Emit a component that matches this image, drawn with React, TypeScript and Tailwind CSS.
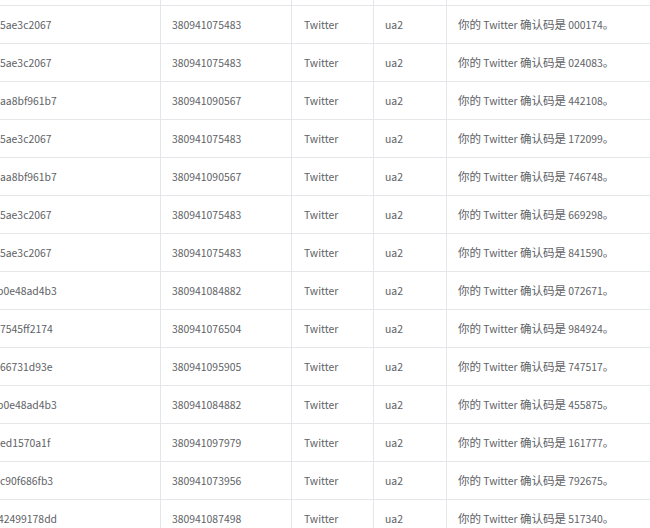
type Row = { id: string; shift: string; phone: string; code: string };

const rows: Row[] = [
  { id: "5ae3c2067", shift: "", phone: "380941075483", code: "000174" },
  { id: "5ae3c2067", shift: "", phone: "380941075483", code: "024083" },
  { id: "aa8bf961b7", shift: "", phone: "380941090567", code: "442108" },
  { id: "5ae3c2067", shift: "", phone: "380941075483", code: "172099" },
  { id: "aa8bf961b7", shift: "", phone: "380941090567", code: "746748" },
  { id: "5ae3c2067", shift: "", phone: "380941075483", code: "669298" },
  { id: "5ae3c2067", shift: "", phone: "380941075483", code: "841590" },
  { id: "b0e48ad4b3", shift: "-ml-[3px]", phone: "380941084882", code: "072671" },
  { id: "7545ff2174", shift: "", phone: "380941076504", code: "984924" },
  { id: "66731d93e", shift: "", phone: "380941095905", code: "747517" },
  { id: "b0e48ad4b3", shift: "-ml-[3px]", phone: "380941084882", code: "455875" },
  { id: "ed1570a1f", shift: "", phone: "380941097979", code: "161777" },
  { id: "c90f686fb3", shift: "", phone: "380941073956", code: "792675" },
  { id: "42499178dd", shift: "-ml-[2px]", phone: "380941087498", code: "517340" },
];

const grid = "grid grid-cols-[161px_131px_82px_73px_1fr]";
const line = "border-b border-[#e4e6ea]";
const cell = `flex items-center whitespace-nowrap ${line}`;

// CJK glyphs sit a bit larger than the latin text in the original
const Cjk = ({ children }: { children: string }) => (
  <span className="text-[11.5px]">{children}</span>
);

export default function App() {
  return (
    <div
      className="h-[528px] w-[650px] overflow-hidden bg-white text-[10.4px] text-[#606266]"
      style={{ fontFamily: '"Noto Sans CJK SC", "Noto Sans", sans-serif' }}
    >
      {/* tail of the row scrolled above */}
      <div className={`${grid} h-[6px]`}>
        <div className={`border-r ${line}`} />
        <div className={`border-r ${line}`} />
        <div className={`border-r ${line}`} />
        <div className={`border-r ${line}`} />
        <div className={line} />
      </div>
      {rows.map((r, i) => (
        <div key={i} className={`${grid} h-[38px]`}>
          <div className={`${cell} overflow-hidden border-r`}>
            <span className={r.shift}>{r.id}</span>
          </div>
          <div className={`${cell} border-r pl-[11px]`}>{r.phone}</div>
          <div className={`${cell} border-r pl-[12px]`}>Twitter</div>
          <div className={`${cell} border-r pl-[11px]`}>ua2</div>
          <div className={`${cell} pl-[11px]`}>
            <Cjk>你的</Cjk>&nbsp;Twitter&nbsp;<Cjk>确认码是</Cjk>&nbsp;{r.code}
            <Cjk>。</Cjk>
          </div>
        </div>
      ))}
    </div>
  );
}
